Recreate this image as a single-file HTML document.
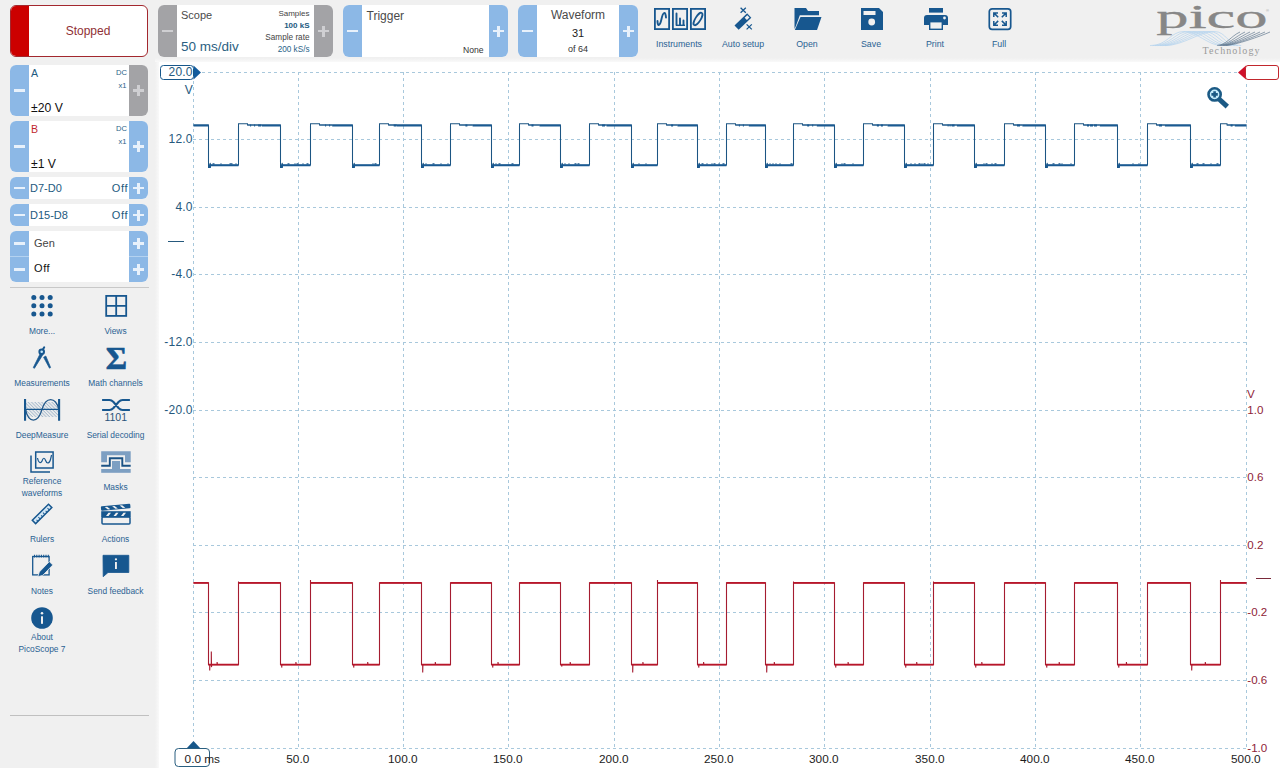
<!DOCTYPE html><html><head><meta charset="utf-8"><title>PicoScope 7</title><style>
*{box-sizing:border-box;margin:0;padding:0}
html,body{width:1280px;height:768px;overflow:hidden;background:#f0f0f0;font-family:"Liberation Sans",sans-serif;}
.abs{position:absolute}
#top{position:absolute;left:0;top:0;width:1280px;height:62px;background:#f0f0f0}
#side{position:absolute;left:0;top:62px;width:159px;height:706px;background:#f0f0f0}
#graph{position:absolute;left:159px;top:62px;width:1121px;height:706px;background:#fff}
.panel{position:absolute;background:#fff;border-radius:6px;overflow:hidden}
.btn{position:absolute;width:19px;background:#8cb8e6;color:#e8f1fb}
.btn.g{background:#a3a3a6;color:#cfcfd2}
.btn i{position:absolute;left:4px;right:4px;top:50%;height:2.400px;margin-top:-1.200px;background:currentColor;display:block}
.btn b{position:absolute;left:50%;width:2.400px;margin-left:-1.200px;top:50%;height:11px;margin-top:-5.500px;background:currentColor;display:block}
.t{position:absolute;white-space:nowrap;line-height:1}
.lbl{position:absolute;white-space:nowrap;line-height:1;font-size:8.400px;color:#2a6293;text-align:center;width:80px}
</style></head><body><div id="top"></div><div id="side"></div><div id="graph"></div>
<div class="abs" style="left:155px;top:58px;width:1125px;height:4px;background:linear-gradient(#f0f0f0,#f9f9f9)"></div>
<div class="abs" style="left:155px;top:62px;width:4px;height:706px;background:linear-gradient(to right,#f0f0f0,#f9f9f9)"></div>
<div class="abs" style="left:10px;top:5px;width:138px;height:52px;border:1px solid #a3282e;border-radius:6px;background:#fff;overflow:hidden"><div class="abs" style="left:0;top:0;width:18px;height:50px;background:#cc0000"></div><div class="t" style="left:18px;width:118px;text-align:center;top:19px;font-size:12px;color:#8f3035">Stopped</div></div>
<div class="panel" style="left:158px;top:5px;width:175px;height:52px"><div class="btn g" style="left:0px;top:0px;height:52px"><i></i></div><div class="btn g" style="left:156px;top:0px;height:52px"><i></i><b></b></div><div class="t" style="left:23px;top:5px;font-size:11px;color:#4a4a4a">Scope</div><div class="t" style="left:23px;top:35px;font-size:13.500px;color:#2b5f82">50 ms/div</div><div class="t" style="right:23.500px;top:4.600px;font-size:8px;color:#444">Samples</div><div class="t" style="right:23.500px;top:16.600px;font-size:8px;color:#1d5a80;font-weight:bold">100 kS</div><div class="t" style="right:23.500px;top:28.600px;font-size:8.200px;color:#444">Sample rate</div><div class="t" style="right:23.500px;top:40.600px;font-size:8.200px;color:#2a6388">200 kS/s</div></div>
<div class="panel" style="left:343px;top:5px;width:165px;height:52px"><div class="btn" style="left:0px;top:0px;height:52px"><i></i></div><div class="btn" style="left:146px;top:0px;height:52px"><i></i><b></b></div><div class="t" style="left:23.500px;top:4.500px;font-size:12px;color:#4a4a4a">Trigger</div><div class="t" style="right:24.500px;top:40.500px;font-size:8.600px;color:#333">None</div></div>
<div class="panel" style="left:518px;top:5px;width:120px;height:52px"><div class="btn" style="left:0px;top:0px;height:52px"><i></i></div><div class="btn" style="left:101px;top:0px;height:52px"><i></i><b></b></div><div class="t" style="left:19px;width:82px;text-align:center;top:4.300px;font-size:12px;color:#4a4a4a">Waveform</div><div class="t" style="left:19px;width:82px;text-align:center;top:23px;font-size:11px;color:#222">31</div><div class="t" style="left:19px;width:82px;text-align:center;top:39.500px;font-size:9px;color:#333">of 64</div></div>
<div class="lbl" style="left:639px;top:39.500px;font-size:8.800px">Instruments</div>
<div class="lbl" style="left:703px;top:39.500px;font-size:8.800px">Auto setup</div>
<div class="lbl" style="left:767px;top:39.500px;font-size:8.800px">Open</div>
<div class="lbl" style="left:831px;top:39.500px;font-size:8.800px">Save</div>
<div class="lbl" style="left:895px;top:39.500px;font-size:8.800px">Print</div>
<div class="lbl" style="left:959px;top:39.500px;font-size:8.800px">Full</div>
<div class="panel" style="left:10px;top:65px;width:138px;height:51px"><div class="btn" style="left:0px;top:0px;height:51px"><i></i></div><div class="btn g" style="left:119px;top:0px;height:51px"><i></i><b></b></div><div class="t" style="left:21px;top:3px;font-size:10.600px;color:#1d5a80">A</div><div class="t" style="right:21px;top:3.500px;font-size:7.600px;color:#2a6388">DC</div><div class="t" style="right:21.500px;top:16.500px;font-size:7.600px;color:#2a6388">x1</div><div class="t" style="left:21px;top:36.600px;font-size:12.200px;color:#111">±20 V</div></div>
<div class="panel" style="left:10px;top:121px;width:138px;height:51px"><div class="btn" style="left:0px;top:0px;height:51px"><i></i></div><div class="btn" style="left:119px;top:0px;height:51px"><i></i><b></b></div><div class="t" style="left:21px;top:3px;font-size:10.600px;color:#c1272d">B</div><div class="t" style="right:21px;top:3.500px;font-size:7.600px;color:#2a6388">DC</div><div class="t" style="right:21.500px;top:16.500px;font-size:7.600px;color:#2a6388">x1</div><div class="t" style="left:21px;top:36.600px;font-size:12.200px;color:#111">±1 V</div></div>
<div class="panel" style="left:10px;top:177px;width:138px;height:22px"><div class="btn" style="left:0px;top:0px;height:22px"><i></i></div><div class="btn" style="left:119px;top:0px;height:22px"><i></i><b></b></div><div class="t" style="left:20px;top:5.500px;font-size:11px;color:#1d5a80">D7-D0</div><div class="t" style="right:19.800px;top:5.500px;font-size:11px;letter-spacing:0.700px;color:#1d5a80">Off</div></div>
<div class="panel" style="left:10px;top:204px;width:138px;height:22px"><div class="btn" style="left:0px;top:0px;height:22px"><i></i></div><div class="btn" style="left:119px;top:0px;height:22px"><i></i><b></b></div><div class="t" style="left:20px;top:5.500px;font-size:11px;color:#1d5a80">D15-D8</div><div class="t" style="right:19.800px;top:5.500px;font-size:11px;letter-spacing:0.700px;color:#1d5a80">Off</div></div>
<div class="panel" style="left:10px;top:231px;width:138px;height:51px"><div class="abs" style="left:0;top:25px;width:19px;height:1px;background:#b4d2f0"></div><div class="abs" style="left:119px;top:25px;width:19px;height:1px;background:#b4d2f0"></div><div class="btn" style="left:0px;top:0px;height:25px"><i></i></div><div class="btn" style="left:0px;top:26px;height:25px"><i></i></div><div class="btn" style="left:119px;top:0px;height:25px"><i></i><b></b></div><div class="btn" style="left:119px;top:26px;height:25px"><i></i><b></b></div><div class="t" style="left:24px;top:7px;font-size:11px;color:#444">Gen</div><div class="t" style="left:24px;top:31.700px;font-size:11px;letter-spacing:0.600px;color:#111">Off</div></div>
<div class="abs" style="left:10px;top:287px;width:139px;height:1px;background:#c8c8c8"></div>
<div class="abs" style="left:10px;top:715px;width:139px;height:1px;background:#c0c0c0"></div>
<div class="lbl" style="left:2px;top:324.8px;line-height:12px">More...</div>
<div class="lbl" style="left:75.500px;top:324.8px;line-height:12px">Views</div>
<div class="lbl" style="left:2px;top:376.8px;line-height:12px">Measurements</div>
<div class="lbl" style="left:75.500px;top:376.8px;line-height:12px">Math channels</div>
<div class="lbl" style="left:2px;top:428.8px;line-height:12px">DeepMeasure</div>
<div class="lbl" style="left:75.500px;top:428.8px;line-height:12px">Serial decoding</div>
<div class="lbl" style="left:2px;top:474.8px;line-height:12px">Reference<br>waveforms</div>
<div class="lbl" style="left:75.500px;top:480.8px;line-height:12px">Masks</div>
<div class="lbl" style="left:2px;top:532.8px;line-height:12px">Rulers</div>
<div class="lbl" style="left:75.500px;top:532.8px;line-height:12px">Actions</div>
<div class="lbl" style="left:2px;top:584.8px;line-height:12px">Notes</div>
<div class="lbl" style="left:75.500px;top:584.8px;line-height:12px">Send feedback</div>
<div class="lbl" style="left:2px;top:630.8px;line-height:12px">About<br>PicoScope 7</div>
<svg class="abs" style="left:0;top:0" width="1280" height="768" viewBox="0 0 1280 768" font-family="Liberation Sans, sans-serif">
<path d="M193.5 81V737 M202 72.5H1237 M298.5 72V749 M193 139.5H1247 M403.5 72V749 M193 207.5H1247 M508.5 72V749 M193 274.5H1247 M614.5 72V749 M193 342.5H1247 M719.5 72V749 M193 410.5H1247 M824.5 72V749 M193 477.5H1247 M930.5 72V749 M193 545.5H1247 M1035.5 72V749 M193 612.5H1247 M1140.5 72V749 M193 680.5H1247 M1246.5 84V749 M211 748.5H1247" stroke="#a8c8dc" stroke-width="1" stroke-dasharray="3 3" fill="none" shape-rendering="crispEdges"/>
<path d="M193.5 125.0L193.5 125.0L193.5 125.0L208.5 125.0L208.5 167.5L210.1 167.5L210.1 162.9L210.7 165.3L238.5 164.9L238.5 123.7L247.5 123.7L247.5 125.0L280.5 125.0L280.5 167.5L282.1 167.5L282.1 162.9L282.7 165.3L310.5 164.9L310.5 123.7L319.5 123.7L319.5 125.0L352.5 125.0L352.5 167.5L354.1 167.5L354.1 162.9L354.7 165.3L379.5 164.9L379.5 123.7L388.5 123.7L388.5 125.0L421.5 125.0L421.5 167.5L423.1 167.5L423.1 162.9L423.7 165.3L450.5 164.9L450.5 123.7L459.5 123.7L459.5 125.0L491.5 125.0L491.5 167.5L493.1 167.5L493.1 162.9L493.7 165.3L519.5 164.9L519.5 123.7L528.5 123.7L528.5 125.0L560.5 125.0L560.5 167.5L562.1 167.5L562.1 162.9L562.7 165.3L589.5 164.9L589.5 123.7L598.5 123.7L598.5 125.0L631.5 125.0L631.5 167.5L633.1 167.5L633.1 162.9L633.7 165.3L657.5 164.9L657.5 123.7L666.5 123.7L666.5 125.0L697.5 125.0L697.5 167.5L699.1 167.5L699.1 162.9L699.7 165.3L726.5 164.9L726.5 123.7L735.5 123.7L735.5 125.0L765.5 125.0L765.5 167.5L767.1 167.5L767.1 162.9L767.7 165.3L793.5 164.9L793.5 123.7L802.5 123.7L802.5 125.0L834.5 125.0L834.5 167.5L836.1 167.5L836.1 162.9L836.7 165.3L863.5 164.9L863.5 123.7L872.5 123.7L872.5 125.0L904.5 125.0L904.5 167.5L906.1 167.5L906.1 162.9L906.7 165.3L933.5 164.9L933.5 123.7L942.5 123.7L942.5 125.0L974.5 125.0L974.5 167.5L976.1 167.5L976.1 162.9L976.7 165.3L1004.5 164.9L1004.5 123.7L1013.5 123.7L1013.5 125.0L1045.5 125.0L1045.5 167.5L1047.1 167.5L1047.1 162.9L1047.7 165.3L1074.5 164.9L1074.5 123.7L1083.5 123.7L1083.5 125.0L1117.5 125.0L1117.5 167.5L1119.1 167.5L1119.1 162.9L1119.7 165.3L1147.5 164.9L1147.5 123.7L1156.5 123.7L1156.5 125.0L1190.5 125.0L1190.5 167.5L1192.1 167.5L1192.1 162.9L1192.7 165.3L1220.5 164.9L1220.5 123.7L1227.0 123.7L1227.0 125.0L1246.5 125.0" stroke="#1c5583" stroke-width="1.05" fill="none" stroke-linejoin="miter"/><path d="M193.5 125.0H193.5M212.5 163.8h2M220.5 163.8h1M229.5 163.8h2M231.5 163.8h1M235.5 163.8h1M247.5 125.0H261.8M287.5 163.8h2M294.5 163.8h1M296.5 163.8h2M302.5 163.8h1M306.5 163.8h2M319.5 125.0H332.2M372.5 163.8h1M374.5 163.8h2M388.5 125.0H397.0M425.5 163.8h1M432.5 163.8h2M440.5 163.8h1M447.5 163.8h1M459.5 125.0H472.6M495.5 163.8h1M498.5 163.8h2M511.5 163.8h2M528.5 125.0H539.5M564.5 163.8h1M568.5 163.8h1M574.5 163.8h2M577.5 163.8h2M598.5 125.0H606.5M638.5 163.8h1M645.5 163.8h1M666.5 125.0H677.5M701.5 163.8h2M706.5 163.8h1M711.5 163.8h1M713.5 163.8h2M718.5 163.8h1M722.5 163.8h2M735.5 125.0H748.8M769.5 163.8h1M772.5 163.8h1M775.5 163.8h1M779.5 163.8h1M790.5 163.8h2M802.5 125.0H816.8M841.5 163.8h1M843.5 163.8h2M852.5 163.8h1M872.5 125.0H887.6M910.5 163.8h1M914.5 163.8h1M918.5 163.8h2M921.5 163.8h1M923.5 163.8h2M927.5 163.8h1M942.5 125.0H956.9M983.5 163.8h1M985.5 163.8h2M991.5 163.8h1M994.5 163.8h2M1013.5 125.0H1022.4M1052.5 163.8h2M1058.5 163.8h2M1061.5 163.8h1M1070.5 163.8h1M1083.5 125.0H1099.8M1132.5 163.8h1M1138.5 163.8h1M1156.5 125.0H1164.9M1196.5 163.8h2M1202.5 163.8h2M1210.5 163.8h1M1216.5 163.8h2M1227.0 125.0H1234.8" stroke="#1c5a8e" stroke-width="1.2" fill="none"/><path d="M193.5 125.5H208.5M208.5 165.2H238.5M208.5 166.7h2.5M250.1 125.5h1M254.1 125.5h1M258.1 125.5h3M261.8 125.5H280.5M280.5 165.2H310.5M280.5 166.7h2.5M325.1 125.5h1M329.1 125.5h1M332.2 125.5H352.5M352.5 165.2H379.5M352.5 166.7h2.5M393.7 125.5h3M397.0 125.5H421.5M421.5 165.2H450.5M421.5 166.7h2.5M465.4 125.5h2M472.6 125.5H491.5M491.5 165.2H519.5M491.5 166.7h2.5M531.5 125.5h2M539.5 125.5H560.5M560.5 165.2H589.5M560.5 166.7h2.5M602.0 125.5h3M606.5 125.5H631.5M631.5 165.2H657.5M631.5 166.7h2.5M671.1 125.5h2M677.5 125.5H697.5M697.5 165.2H726.5M697.5 166.7h2.5M738.9 125.5h1M742.9 125.5h1M748.8 125.5H765.5M765.5 165.2H793.5M765.5 166.7h2.5M807.2 125.5h2M812.2 125.5h1M816.8 125.5H834.5M834.5 165.2H863.5M834.5 166.7h2.5M876.9 125.5h2M880.9 125.5h2M887.6 125.5H904.5M904.5 165.2H933.5M904.5 166.7h2.5M947.6 125.5h1M949.6 125.5h1M951.6 125.5h3M956.9 125.5H974.5M974.5 165.2H1004.5M974.5 166.7h2.5M1017.0 125.5h3M1022.4 125.5H1045.5M1045.5 165.2H1074.5M1045.5 166.7h2.5M1087.0 125.5h2M1090.0 125.5h3M1094.0 125.5h3M1099.8 125.5H1117.5M1117.5 165.2H1147.5M1117.5 166.7h2.5M1159.0 125.5h3M1164.9 125.5H1190.5M1190.5 165.2H1220.5M1190.5 166.7h2.5M1230.6 125.5h2M1234.8 125.5H1246.5" stroke="#1a5a92" stroke-width="2" fill="none"/>
<path d="M193.5 582.9L208.5 582.9L208.5 664.6L209.7 664.6L209.7 670.6L209.9 664.6L211.3 664.6L211.3 651.6L211.5 667.1L211.7 664.6L217.1 664.6L217.1 662.0L217.4 664.6L238.5 664.6L238.5 581.4L238.5 582.9L280.5 582.9L280.5 664.6L281.7 664.6L281.7 667.6L281.9 664.6L295.9 664.6L295.9 662.0L296.2 664.6L310.5 664.6L310.5 579.9L310.5 582.9L352.5 582.9L352.5 664.6L353.7 664.6L353.7 667.6L353.9 664.6L367.7 664.6L367.7 662.0L368.0 664.6L379.5 664.6L379.5 582.9L379.5 582.9L421.5 582.9L421.5 664.6L422.7 664.6L422.7 672.6L422.9 664.6L435.3 664.6L435.3 662.0L435.6 664.6L450.5 664.6L450.5 582.9L450.5 582.9L491.5 582.9L491.5 664.6L492.7 664.6L492.7 667.6L492.9 664.6L498.0 664.6L498.0 662.0L498.3 664.6L519.5 664.6L519.5 582.9L519.5 582.9L560.5 582.9L560.5 664.6L561.7 664.6L561.7 666.6L561.9 664.6L570.2 664.6L570.2 662.0L570.5 664.6L589.5 664.6L589.5 582.9L589.5 582.9L631.5 582.9L631.5 664.6L632.7 664.6L632.7 672.6L632.9 664.6L642.9 664.6L642.9 662.0L643.2 664.6L657.5 664.6L657.5 579.9L657.5 582.9L697.5 582.9L697.5 664.6L698.7 664.6L698.7 667.6L698.9 664.6L703.6 664.6L703.6 662.0L703.9 664.6L726.5 664.6L726.5 582.9L726.5 582.9L765.5 582.9L765.5 664.6L766.7 664.6L766.7 672.6L766.9 664.6L774.3 664.6L774.3 662.0L774.6 664.6L793.5 664.6L793.5 581.4L793.5 582.9L834.5 582.9L834.5 664.6L835.7 664.6L835.7 667.6L835.9 664.6L848.1 664.6L848.1 662.0L848.4 664.6L863.5 664.6L863.5 582.9L863.5 582.9L904.5 582.9L904.5 664.6L905.7 664.6L905.7 667.6L905.9 664.6L916.7 664.6L916.7 662.0L917.0 664.6L933.5 664.6L933.5 581.4L933.5 582.9L974.5 582.9L974.5 664.6L975.7 664.6L975.7 667.6L975.9 664.6L981.8 664.6L981.8 662.0L982.1 664.6L1004.5 664.6L1004.5 582.9L1004.5 582.9L1045.5 582.9L1045.5 664.6L1046.7 664.6L1046.7 667.6L1046.9 664.6L1059.2 664.6L1059.2 662.0L1059.5 664.6L1074.5 664.6L1074.5 582.9L1074.5 582.9L1117.5 582.9L1117.5 664.6L1118.7 664.6L1118.7 667.6L1118.9 664.6L1126.4 664.6L1126.4 662.0L1126.7 664.6L1147.5 664.6L1147.5 582.9L1147.5 582.9L1190.5 582.9L1190.5 664.6L1191.7 664.6L1191.7 670.6L1191.9 664.6L1205.3 664.6L1205.3 662.0L1205.6 664.6L1220.5 664.6L1220.5 579.9L1220.5 582.9L1246.5 582.9" stroke="#a51c30" stroke-width="1.1" fill="none" stroke-linejoin="miter"/><path d="M193.5 582.9H208.5M208.5 664.6H238.5M238.5 582.9H280.5M280.5 664.6H310.5M310.5 582.9H352.5M352.5 664.6H379.5M379.5 582.9H421.5M421.5 664.6H450.5M450.5 582.9H491.5M491.5 664.6H519.5M519.5 582.9H560.5M560.5 664.6H589.5M589.5 582.9H631.5M631.5 664.6H657.5M657.5 582.9H697.5M697.5 664.6H726.5M726.5 582.9H765.5M765.5 664.6H793.5M793.5 582.9H834.5M834.5 664.6H863.5M863.5 582.9H904.5M904.5 664.6H933.5M933.5 582.9H974.5M974.5 664.6H1004.5M1004.5 582.9H1045.5M1045.5 664.6H1074.5M1074.5 582.9H1117.5M1117.5 664.6H1147.5M1147.5 582.9H1190.5M1190.5 664.6H1220.5M1220.5 582.9H1246.5" stroke="#b8162a" stroke-width="1.9" fill="none"/>
<text x="192.700" y="142.7" font-size="12" letter-spacing="0.2" fill="#26597d" text-anchor="end">12.0</text>
<text x="192.700" y="210.7" font-size="12" letter-spacing="0.2" fill="#26597d" text-anchor="end">4.0</text>
<text x="192.700" y="277.7" font-size="12" letter-spacing="0.2" fill="#26597d" text-anchor="end">-4.0</text>
<text x="192.700" y="345.7" font-size="12" letter-spacing="0.2" fill="#26597d" text-anchor="end">-12.0</text>
<text x="192.700" y="413.7" font-size="12" letter-spacing="0.2" fill="#26597d" text-anchor="end">-20.0</text>
<text x="192.700" y="93.800" font-size="12" fill="#26597d" text-anchor="end">V</text>
<path d="M168 241.500H184" stroke="#26597d" stroke-width="1"/>
<path d="M193.500 65.500L201 72.500L193.500 79.500Z" fill="#125c9e"/>
<rect x="160.500" y="65.500" width="33" height="14" rx="3" fill="#fff" stroke="#17578a" stroke-width="1"/>
<text x="192.700" y="75.700" font-size="12" letter-spacing="0.2" fill="#26597d" text-anchor="end">20.0</text>
<text x="1247.300" y="413.8" font-size="11.600" fill="#8f2437">1.0</text>
<text x="1247.300" y="480.8" font-size="11.600" fill="#8f2437">0.6</text>
<text x="1247.300" y="548.8" font-size="11.600" fill="#8f2437">0.2</text>
<text x="1247.300" y="615.8" font-size="11.600" fill="#8f2437">-0.2</text>
<text x="1247.300" y="683.8" font-size="11.600" fill="#8f2437">-0.6</text>
<text x="1247.300" y="751.8" font-size="11.600" fill="#8f2437">-1.0</text>
<text x="1247" y="397.500" font-size="11.600" fill="#8f2437">V</text>
<path d="M1256 578.500H1271" stroke="#7a2a3a" stroke-width="1"/>
<path d="M1246 65.500L1238 72.500L1246 79.500Z" fill="#d0102a"/>
<rect x="1245.500" y="65.500" width="33" height="14" rx="2.500" fill="#fff" stroke="#c1272d" stroke-width="1"/>
<text x="297.8" y="762.800" font-size="11.800" fill="#1c1c1c" text-anchor="middle">50.0</text>
<text x="402.8" y="762.800" font-size="11.800" fill="#1c1c1c" text-anchor="middle">100.0</text>
<text x="507.8" y="762.800" font-size="11.800" fill="#1c1c1c" text-anchor="middle">150.0</text>
<text x="613.8" y="762.800" font-size="11.800" fill="#1c1c1c" text-anchor="middle">200.0</text>
<text x="718.8" y="762.800" font-size="11.800" fill="#1c1c1c" text-anchor="middle">250.0</text>
<text x="823.8" y="762.800" font-size="11.800" fill="#1c1c1c" text-anchor="middle">300.0</text>
<text x="929.8" y="762.800" font-size="11.800" fill="#1c1c1c" text-anchor="middle">350.0</text>
<text x="1034.8" y="762.800" font-size="11.800" fill="#1c1c1c" text-anchor="middle">400.0</text>
<text x="1139.8" y="762.800" font-size="11.800" fill="#1c1c1c" text-anchor="middle">450.0</text>
<text x="1245.8" y="762.800" font-size="11.800" fill="#1c1c1c" text-anchor="middle">500.0</text>
<path d="M186.500 748.500L193.500 741L200.500 748.500Z" fill="#17578a"/>
<rect x="175" y="748.500" width="34.500" height="18" rx="3.500" fill="#fff" stroke="#2a5f80" stroke-width="1"/>
<text x="184.600" y="762.800" font-size="11.800" fill="#1c1c1c">0.0 ms</text>
<rect x="654.9" y="8.9" width="14.2" height="20.2" fill="none" stroke="#17578f" stroke-width="1.8"/>
<rect x="672.9" y="8.9" width="14.2" height="20.2" fill="none" stroke="#17578f" stroke-width="1.8"/>
<rect x="690.9" y="8.9" width="14.2" height="20.2" fill="none" stroke="#17578f" stroke-width="1.8"/>
<path d="M657.5 21C657.5 27 660 26 661.5 19C663 12 665.5 10.5 666 17.5" fill="none" stroke="#17578f" stroke-width="1.9" stroke-linecap="round"/>
<path d="M676.5 25V13.5M680 25V18.5M683.5 25V20.5" fill="none" stroke="#17578f" stroke-width="1.9" stroke-linecap="round"/><path d="M676 25.3H685" stroke="#17578f" stroke-width="1.4"/>
<ellipse cx="698" cy="19" rx="7.2" ry="2.6" transform="rotate(-58 698 19)" fill="none" stroke="#17578f" stroke-width="1.8"/>
<g transform="rotate(-44 742.900 21.600)"><rect x="734.100" y="18.600" width="17.600" height="6" fill="#17578f"/><rect x="746.900" y="20" width="3.600" height="3.200" fill="#f0f0f0"/></g>
<path d="M740.600 7.800L745.800 12.800M745.800 7.800L740.600 12.800M746.600 24.400L751.800 29.400M751.800 24.400L746.600 29.400" stroke="#17578f" stroke-width="1.300" fill="none"/>
<path d="M794.500 8H806L808 11H819V15.200H799.800L795.900 26L794.500 29Z" fill="#17578f"/>
<path d="M800.500 17H821.500L817 30H794.800Z" fill="#17578f"/>
<path d="M861 8H879L883 12V30H861Z" fill="#17578f"/><rect x="863.5" y="11" width="12" height="4" fill="#f0f0f0"/><circle cx="871.7" cy="22" r="3.4" fill="#f0f0f0"/>
<rect x="929" y="8" width="14" height="4.6" fill="#17578f"/>
<path d="M924 25V18Q924 15 927 15H945Q948 15 948 18V25Z" fill="#17578f"/>
<rect x="929.7" y="21.700" width="12.6" height="7.600" fill="#f0f0f0" stroke="#17578f" stroke-width="1.4"/>
<circle cx="944.5" cy="18" r="1.4" fill="#f0f0f0"/>
<rect x="989.3" y="8.8" width="21.4" height="20.6" rx="2.8" fill="none" stroke="#17578f" stroke-width="1.7"/>
<path d="M998.2 17.3L993.8 12.900000000000002M998.0 12.900000000000002H993.8V17.1" fill="none" stroke="#17578f" stroke-width="1.5"/>
<path d="M1001.8 17.3L1006.2 12.900000000000002M1002.0 12.900000000000002H1006.2V17.1" fill="none" stroke="#17578f" stroke-width="1.5"/>
<path d="M998.2 20.900000000000002L993.8 25.3M998.0 25.3H993.8V21.1" fill="none" stroke="#17578f" stroke-width="1.5"/>
<path d="M1001.8 20.900000000000002L1006.2 25.3M1002.0 25.3H1006.2V21.1" fill="none" stroke="#17578f" stroke-width="1.5"/>
<circle cx="33.8" cy="297.5" r="2.5" fill="#17578f"/>
<circle cx="33.8" cy="305.8" r="2.5" fill="#17578f"/>
<circle cx="33.8" cy="314" r="2.5" fill="#17578f"/>
<circle cx="42" cy="297.5" r="2.5" fill="#17578f"/>
<circle cx="42" cy="305.8" r="2.5" fill="#17578f"/>
<circle cx="42" cy="314" r="2.5" fill="#17578f"/>
<circle cx="50.2" cy="297.5" r="2.5" fill="#17578f"/>
<circle cx="50.2" cy="305.8" r="2.5" fill="#17578f"/>
<circle cx="50.2" cy="314" r="2.5" fill="#17578f"/>
<rect x="106.200" y="295.900" width="20" height="20" fill="none" stroke="#17578f" stroke-width="1.8"/><path d="M116.200 296V316M106 305.900H126" stroke="#17578f" stroke-width="1.8"/>
<path d="M40.300 353.500L33.300 367.600L34.400 368.300L42.900 354.500Z" fill="#17578f" stroke="#17578f" stroke-width="0.800" stroke-linejoin="round"/>
<path d="M43.600 357.300L49.500 368.200L50.600 367.500L45.800 356Z" fill="#17578f" stroke="#17578f" stroke-width="0.700" stroke-linejoin="round"/>
<path d="M42.600 350L44.200 347.300" stroke="#17578f" stroke-width="2" stroke-linecap="round"/>
<circle cx="41.700" cy="351.700" r="2.300" fill="#c4e9fd" stroke="#17578f" stroke-width="2"/>
<text x="116.400" y="368.700" font-family="Liberation Serif, serif" font-weight="bold" font-size="32.500" text-anchor="middle" fill="#17578f" stroke="#17578f" stroke-width="0.700">Σ</text>
<defs><pattern id="hat" width="2.4" height="2.4" patternUnits="userSpaceOnUse" patternTransform="rotate(45)"><rect width="2.4" height="1" fill="#a9bccd"/></pattern></defs>
<rect x="26" y="402" width="32" height="15" fill="url(#hat)"/>
<path d="M25.500 409.400C28.500 423.600 38 423.600 42 409.400C46 396.300 55.500 396.300 58.800 409.400" fill="none" stroke="#23598a" stroke-width="1.300"/>
<path d="M25.050 399V420.800M59.100 399V420.800" stroke="#17578f" stroke-width="2.100"/><path d="M25 409.400H59" stroke="#17578f" stroke-width="1.100"/>
<path d="M102.100 400H109.500C111.500 400 112 400.500 113.500 402L118.500 408C120 409.500 120.500 410 122.500 410H129.900M102.100 410H109.500C111.500 410 112 409.500 113.500 408L118.500 402C120 400.500 120.500 400 122.500 400H129.900" fill="none" stroke="#17578f" stroke-width="2.100"/>
<text x="115.700" y="420.700" font-size="10.500" text-anchor="middle" fill="#2a547a">1101</text>
<rect x="35.700" y="452" width="17.400" height="16" fill="none" stroke="#17578f" stroke-width="1.500"/>
<path d="M31 455.500V472H50" fill="none" stroke="#17578f" stroke-width="1.500"/>
<path d="M37.500 458C38.500 463.300 41 463.800 42.200 460.500C43.200 457.500 44.600 457.500 45.600 460.500C46.800 464 49.300 464 50.500 459.500C51 457.500 51.300 456 51.600 455" fill="none" stroke="#17578f" stroke-width="1.200"/>
<path d="M101.200 451.300H130.700V462.200H125V455.200H107V462.200H101.200Z" fill="#7d9fc2"/>
<rect x="101.200" y="469" width="29.500" height="3.800" fill="#7d9fc2"/>
<rect x="112" y="461" width="8" height="8" fill="#7d9fc2"/>
<path d="M101.200 465.700H109.800V458.300H122.300V465.700H130.700" fill="none" stroke="#1b5284" stroke-width="1.900"/>
<g transform="rotate(-44.700 42.060 513.900)"><rect x="30.660" y="511.550" width="22.800" height="4.700" fill="#d6e9f7" stroke="#17578f" stroke-width="1.500"/><path d="M34 516.250V514.200M37.200 516.250V513.600M40.400 516.250V514.200M43.600 516.250V513.600M46.800 516.250V514.200M50 516.250V513.600" stroke="#17578f" stroke-width="1"/></g>
<rect x="102" y="517" width="28" height="7" rx="1" fill="#f0f0f0" stroke="#17578f" stroke-width="1.500"/>
<rect x="101.200" y="511.200" width="29.500" height="6" fill="#17578f"/>
<path d="M106 516L108.500 512.700H111L108.500 516ZM113.500 516L116 512.700H118.500L116 516ZM121 516L123.500 512.700H126L123.500 516Z" fill="#f0f0f0"/>
<g transform="rotate(-5.200 101.500 510.800)"><rect x="101.200" y="506.400" width="29.500" height="4.400" rx="1" fill="#17578f"/><path d="M105 507.200L108 510H110.500L107.500 507.200ZM112.500 507.200L115.500 510H118L115 507.200ZM120 507.200L123 510H125.500L122.500 507.200Z" fill="#f0f0f0"/></g>
<rect x="32.700" y="556.500" width="16.400" height="18.400" fill="#f0f0f0" stroke="#17578f" stroke-width="1.300"/>
<path d="M34.500 554.800V557.500M36.800 554.800V557.500M39.100 554.800V557.500M41.400 554.800V557.500M43.700 554.800V557.500M46 554.800V557.500M48.300 554.800V557.500" stroke="#17578f" stroke-width="1.100"/>
<path d="M49.300 561.600L52.800 565L42.800 575.300L37.800 576.800L39.300 572Z" fill="#17578f" stroke="#f0f0f0" stroke-width="0.800"/>
<path d="M103 555.300H128.800V572.500H108L103.200 576.700Z" fill="#17578f" stroke="#17578f" stroke-width="0.800" stroke-linejoin="round"/>
<rect x="115" y="562" width="1.900" height="7" fill="#f0f0f0"/><circle cx="115.950" cy="559.300" r="1.150" fill="#f0f0f0"/>
<circle cx="42" cy="618" r="10.800" fill="#17578f"/><rect x="41" y="616.300" width="2" height="7.500" fill="#f0f0f0"/><circle cx="42" cy="613.300" r="1.250" fill="#f0f0f0"/>
<path d="M1219 99L1227.300 106.700" stroke="#1b5a85" stroke-width="5" stroke-linecap="butt"/>
<circle cx="1214.600" cy="94.400" r="6.100" fill="#c5ecfb" stroke="#1b5a85" stroke-width="2.600"/>
<path d="M1211.400 94.400H1217.800M1214.600 91.200V97.600" stroke="#1b5a85" stroke-width="2.600"/>
<g fill="none" stroke-width="0.700">
<path d="M1150.0 45.600C1168.0 45.600 1170 31.500 1184 31.500C1197 31.500 1208.0 45.600 1222.0 45.600" stroke="#b3d2ee"/>
<path d="M1152.5 45.600C1170.5 45.600 1175 31.500 1189 31.500C1202 31.500 1211.2 45.600 1225.2 45.600" stroke="#b3d2ee"/>
<path d="M1155.0 45.600C1173.0 45.600 1180 31.500 1194 31.500C1207 31.500 1214.4 45.600 1228.4 45.600" stroke="#b3d2ee"/>
<path d="M1157.5 45.600C1175.5 45.600 1185 31.500 1199 31.500C1212 31.500 1217.6 45.600 1231.6 45.600" stroke="#b3d2ee"/>
<path d="M1160.0 45.600C1178.0 45.600 1190 31.500 1204 31.500C1217 31.500 1220.8 45.600 1234.8 45.600" stroke="#b3d2ee"/>
<path d="M1162.5 45.600C1180.5 45.600 1195 31.500 1209 31.500C1222 31.500 1224.0 45.600 1238.0 45.600" stroke="#b3d2ee"/>
<path d="M1165.0 45.600C1183.0 45.600 1200 31.500 1214 31.500C1227 31.500 1227.2 45.600 1241.2 45.600" stroke="#b3d2ee"/>
<path d="M1217.0 45.400C1226.0 45.400 1231 36 1240 32" stroke="#62788f"/>
<path d="M1218.5 45.400C1227.5 45.400 1236 36 1245 32" stroke="#62788f"/>
<path d="M1220.0 45.400C1229.0 45.400 1241 36 1250 32" stroke="#62788f"/>
<path d="M1221.5 45.400C1230.5 45.400 1246 36 1255 32" stroke="#62788f"/>
<path d="M1223.0 45.400C1232.0 45.400 1251 36 1260 32" stroke="#62788f"/>
<path d="M1224.5 45.400C1233.5 45.400 1256 36 1265 32" stroke="#62788f"/>
<path d="M1226.0 45.400C1235.0 45.400 1261 36 1270 32" stroke="#62788f"/>
</g>
<text transform="translate(1156.300 28.100) scale(1.960 1)" font-family="Liberation Serif, serif" font-size="33" fill="#878787" stroke="#878787" stroke-width="0.300">pico</text>
<text x="1202.500" y="54" font-family="Liberation Serif, serif" font-size="10" fill="#9a9a9a" textLength="57" lengthAdjust="spacing">Technology</text>
<text x="1266" y="12" font-family="Liberation Sans, sans-serif" font-size="4" fill="#999">®</text>
</svg></body></html>
